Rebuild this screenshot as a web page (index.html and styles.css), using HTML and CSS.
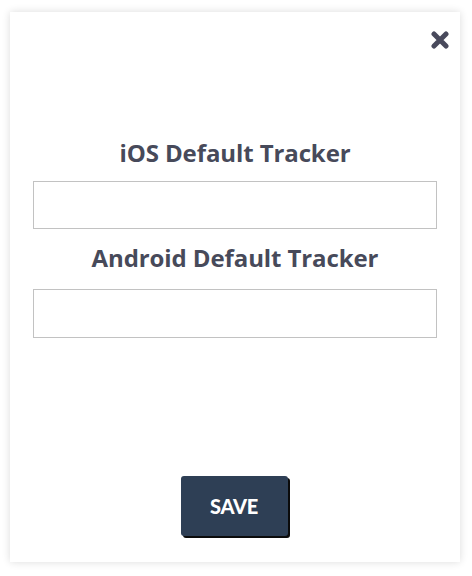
FILE: index.html
```html
<!DOCTYPE html>
<html lang="en">
<head>
<meta charset="utf-8">
<title>Default Trackers</title>
<link rel="stylesheet" href="styles.css">
</head>
<body>
<div class="modal">
  <div class="modal-header">
    <button class="close" type="button" aria-label="Close">
      <svg width="18" height="18" viewBox="0 0 18 18"><path d="M3 3L15 15M15 3L3 15" stroke="#494a5c" stroke-width="5" stroke-linecap="round"/></svg>
    </button>
  </div>
  <div class="fields">
    <label class="field">
      <span class="field-title">iOS Default Tracker</span>
      <input class="field-input" type="text">
    </label>
    <label class="field field-android">
      <span class="field-title">Android Default Tracker</span>
      <input class="field-input field-input-tall" type="text">
    </label>
  </div>
  <div class="actions">
    <button class="save" type="button">SAVE</button>
  </div>
</div>
</body>
</html>
```
FILE: styles.css
```css
html, body {
  margin: 0;
  background: #ffffff;
}
body {
  padding: 12px 12px 14px 10px;
  font-family: "Open Sans", Lato, sans-serif;
}
.modal {
  width: 450px;
  height: 550px;
  box-sizing: border-box;
  background: #ffffff;
  box-shadow: 0 0 8px rgba(0, 0, 0, 0.14);
  padding: 19px 23px 24px;
  display: flex;
  flex-direction: column;
}
.modal-header {
  display: flex;
  justify-content: flex-end;
  margin-right: -12px;
}
.close {
  width: 18px;
  height: 18px;
  padding: 0;
  border: 0;
  background: none;
  display: block;
  cursor: pointer;
}
.close svg {
  display: block;
}
.fields {
  margin-top: 90px;
  display: flex;
  flex-direction: column;
  gap: 15px;
}
.field {
  display: flex;
  flex-direction: column;
  gap: 14px;
}
.field-android {
  gap: 17px;
}
.field-title {
  text-align: center;
  font-size: 24px;
  line-height: 28px;
  font-weight: 700;
  letter-spacing: -0.1px;
  color: #474a5a;
}
.field-input {
  box-sizing: border-box;
  width: 100%;
  height: 48px;
  border: 1px solid #c2c2c2;
  border-radius: 0;
  margin: 0;
  padding: 0 10px;
  font: inherit;
  font-size: 16px;
  outline: none;
}
.field-input-tall {
  height: 49px;
}
.actions {
  margin-top: auto;
  display: flex;
  justify-content: center;
  padding-right: 2px;
}
.save {
  width: 107px;
  height: 60px;
  border: 0;
  border-radius: 3px;
  background: #2e3f55;
  box-shadow: 2px 2px 0 #0b0b0b;
  color: #ffffff;
  font-family: Lato, "Open Sans", sans-serif;
  font-weight: 900;
  font-size: 20px;
  letter-spacing: -0.3px;
  margin-bottom: 2px;
  cursor: pointer;
}
```
